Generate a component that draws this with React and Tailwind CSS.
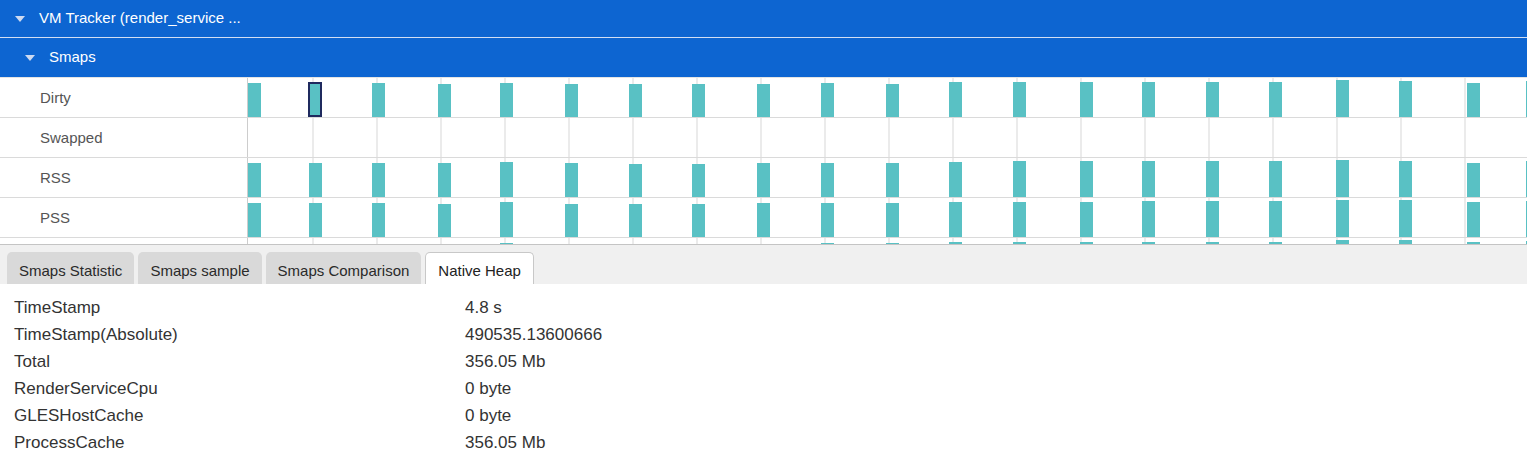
import React from 'react';

const XS = [248, 309, 372, 438, 500, 565, 629, 692, 757, 821, 886, 949, 1013, 1080, 1142, 1206, 1269, 1336, 1399, 1467, 1526];

const TRACKS = [
  { id: 'dirty', name: 'Dirty', tops: [5, 5, 5, 6, 5, 6, 6, 6, 6, 5, 6, 4, 4, 4, 4, 4, 4, 2, 3, 5, 3], selected: 1 },
  { id: 'swapped', name: 'Swapped', tops: null },
  { id: 'rss', name: 'RSS', tops: [5, 5, 5, 5, 4, 5, 6, 6, 5, 5, 5, 4, 3, 3, 3, 3, 3, 2, 3, 5, 3] },
  { id: 'pss', name: 'PSS', tops: [5, 5, 5, 6, 4, 6, 6, 6, 5, 5, 5, 4, 4, 4, 3, 3, 3, 2, 2, 4, 3] },
  // next track is scrolled out, only the bar tops peek in
  { id: 'uss', name: '', tops: [null, null, null, null, 5, null, null, null, null, 5, 5, 4, 4, 4, 4, 4, 4, 2, 2, 4, 3] },
];

const ROWS = [
  ['TimeStamp', '4.8 s'],
  ['TimeStamp(Absolute)', '490535.13600666'],
  ['Total', '356.05 Mb'],
  ['RenderServiceCpu', '0 byte'],
  ['GLESHostCache', '0 byte'],
  ['ProcessCache', '356.05 Mb'],
];

const TABS = ['Smaps Statistic', 'Smaps sample', 'Smaps Comparison', 'Native Heap'];

const Caret = () => (
  <svg width="10" height="6" viewBox="0 0 10 6" className="shrink-0">
    <polygon points="0,0 10,0 5,6" fill="#cddaf1" />
  </svg>
);

const Track = ({ track }) => (
  <div className="flex h-[40px] shrink-0 border-b border-[#dadada]">
    <div className="w-[248px] shrink-0 border-r border-[#cdcdcd] pl-[40px] pt-[1px] flex items-center text-[15px] text-[#555]">
      {track.name}
    </div>
    <div className="relative flex-1 overflow-hidden">
      {Array.from({ length: 19 }, (_, i) => (
        <div key={i} className="absolute top-0 bottom-0 w-[2px] bg-[#ebebeb]" style={{ left: 64 * (i + 1) }} />
      ))}
      {track.tops &&
        track.tops.map((t, i) =>
          t == null ? null : (
            <div
              key={i}
              className="absolute bottom-0 w-[13px] bg-[#59c1c4]"
              style={{ left: XS[i] - 248, height: 39 - t }}
            />
          )
        )}
      {track.selected != null && (
        <div
          className="absolute w-[14px] h-[35px] border-2 border-[#1f2a5e]"
          style={{ left: XS[track.selected] - 249, top: 4 }}
        />
      )}
    </div>
  </div>
);

export default function App() {
  return (
    <div className="w-[1527px] h-[458px] overflow-hidden bg-white font-['Liberation_Sans',Arial,sans-serif]">
      <div className="h-[38px] bg-[#0d65d1] border-b border-[#d3dff3] flex items-center pl-[15px] gap-[14px] text-[15px] text-white">
        <Caret />
        <span>VM Tracker (render_service ...</span>
      </div>
      <div className="h-[40px] bg-[#0d65d1] border-b border-[#e4e4e4] flex items-center pl-[25px] gap-[14px] text-[15px] text-white">
        <Caret />
        <span>Smaps</span>
      </div>

      <div className="h-[167px] overflow-hidden border-b border-[#c4c4c4] flex flex-col">
        {TRACKS.map((t) => (
          <Track key={t.id} track={t} />
        ))}
      </div>

      <div className="h-[39px] bg-[#f0f0f0] flex items-end pl-[7px] gap-[4px]">
        {TABS.map((tab, i) =>
          i === 3 ? (
            <div
              key={tab}
              className="h-[32px] px-[12px] pt-[6px] flex items-center bg-white border border-b-0 border-[#c8c8c8] rounded-t-[5px] text-[15px] text-[#222]"
            >
              {tab}
            </div>
          ) : (
            <div
              key={tab}
              className="h-[32px] px-[12px] pt-[6px] flex items-center bg-[#d9d9d9] rounded-t-[5px] text-[15px] text-[#2a2a2a]"
            >
              {tab}
            </div>
          )
        )}
      </div>

      <div className="pt-[10px] text-[17px] text-[#333]">
        {ROWS.map(([k, v]) => (
          <div key={k} className="flex h-[27px] leading-[27px]">
            <div className="w-[465px] pl-[14px]">{k}</div>
            <div>{v}</div>
          </div>
        ))}
      </div>
    </div>
  );
}
